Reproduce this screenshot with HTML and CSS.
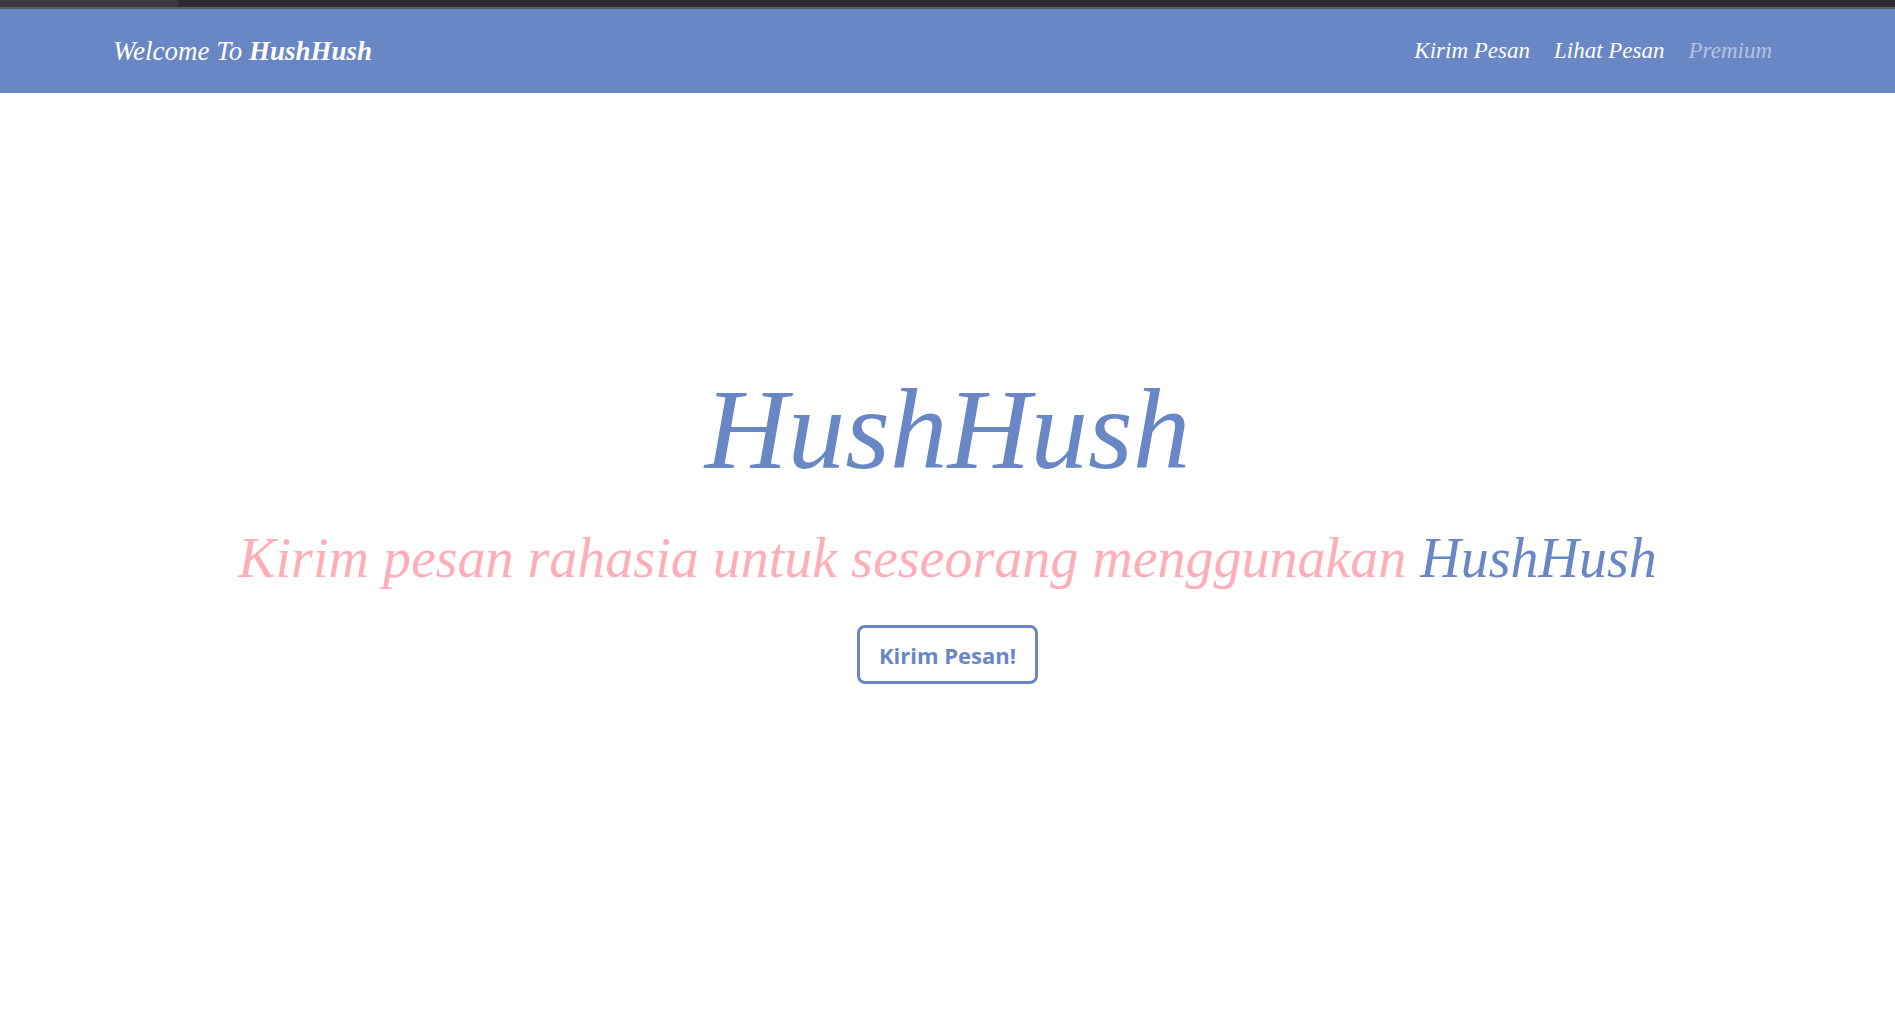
FILE: index.html
```html
<!DOCTYPE html>
<html lang="id">
<head>
<meta charset="utf-8">
<title>HushHush</title>
<link rel="stylesheet" href="styles.css">
</head>
<body>
<div class="chrome"><div class="chrome-left"></div><div class="chrome-right"></div></div>
<nav class="navbar">
  <a class="brand" href="#">Welcome To <b>HushHush</b></a>
  <div class="links">
    <a class="link" href="#">Kirim Pesan</a>
    <a class="link" href="#">Lihat Pesan</a>
    <a class="link muted" href="#">Premium</a>
  </div>
</nav>
<main class="hero">
  <h1 class="title">HushHush</h1>
  <p class="subtitle">Kirim pesan rahasia untuk seseorang menggunakan <span class="accent">HushHush</span></p>
  <a class="btn" href="#">Kirim Pesan!</a>
</main>
</body>
</html>
```
FILE: styles.css
```css
html, body { margin: 0; padding: 0; background: #fff; }
body { font-family: "Liberation Serif", serif; }
.chrome { display: flex; height: 7px; border-bottom: 2px solid #5b5c5e; }
.chrome-left { width: 178px; background: #3a3b3e; }
.chrome-right { flex: 1; background: #2b2c2f; }
.navbar {
  display: flex; align-items: center; justify-content: space-between;
  height: 84px; background: #6987c5;
  padding: 0 123px 0 113px;
}
.brand { color: #fff; text-decoration: none; font-style: italic; font-size: 27px; }
.brand b { font-weight: bold; }
.links { display: flex; gap: 24px; }
.link { color: #fff; text-decoration: none; font-style: italic; font-size: 23px; }
.link.muted { color: #b5c2e2; }
.hero { display: flex; flex-direction: column; align-items: center; padding-top: 267px; }
.title { margin: 0; font-weight: normal; font-style: italic; color: #6987c5; font-size: 115px; line-height: 140px; }
.subtitle { margin: 18px 0 0; font-style: italic; color: #ffaeb9; font-size: 56px; line-height: 80px; }
.accent { color: #6987c5; }
.btn {
  margin-top: 27px; box-sizing: border-box; width: 181px; height: 59px;
  display: flex; align-items: center; justify-content: center;
  border: 3px solid #6987c5; border-radius: 8px; color: #6987c5;
  font-family: "Open Sans", sans-serif; font-weight: bold; font-size: 22px; text-decoration: none;
}
```
